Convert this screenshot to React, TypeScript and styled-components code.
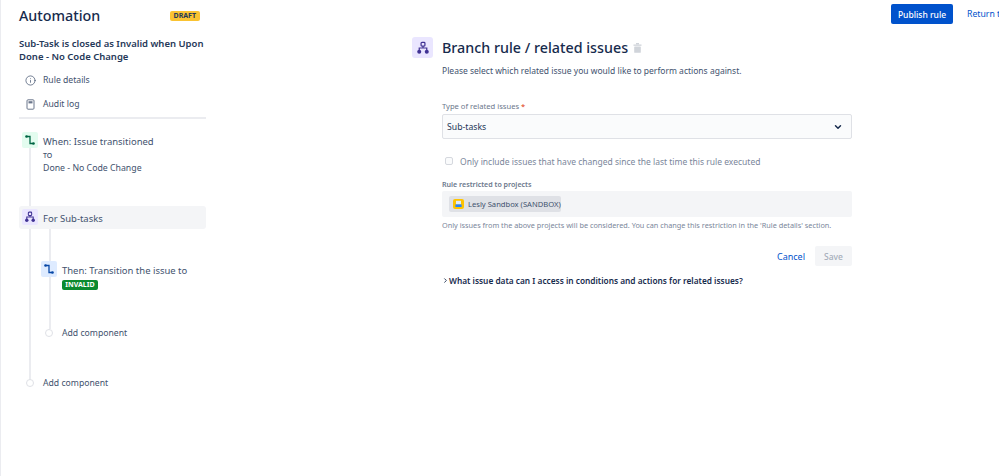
import React from 'react';
import styled, { createGlobalStyle } from 'styled-components';
import { ChevronDown, ChevronRight, Info } from 'lucide-react';

const GlobalStyle = createGlobalStyle`
  html, body {
    margin: 0;
    padding: 0;
    width: 999px;
    height: 476px;
    overflow: hidden;
    background: #fff;
    font-family: "Noto Sans", "Open Sans", sans-serif;
    color: #172b4d;
  }
  * { box-sizing: border-box; }
`;

const Page = styled.div`
  width: 999px;
  height: 476px;
  display: flex;
  overflow: hidden;
  border-left: 1px solid #ebecf0;
`;

const Sidebar = styled.aside`
  width: 187px;
  margin-left: 18px;
  flex-shrink: 0;
  display: flex;
  flex-direction: column;
`;

const SideHeader = styled.div`
  height: 31px;
  display: flex;
  align-items: center;
  justify-content: space-between;
  padding-right: 6px;
`;

const AppTitle = styled.h1`
  margin: 0;
  font-size: 14.3px;
  font-weight: 500;
  color: #172b4d;
`;

const DraftBadge = styled.span`
  height: 10px;
  padding: 0 4px;
  border-radius: 2px;
  background: #fac332;
  color: #253858;
  font-size: 7px;
  font-weight: 700;
  line-height: 10px;
`;

const RuleName = styled.h2`
  margin: 6px 0 0;
  font-size: 9.5px;
  line-height: 13px;
  font-weight: 600;
  color: #253858;
`;

const SideMenu = styled.nav`
  margin-top: 7px;
  padding-bottom: 3px;
  display: flex;
  flex-direction: column;
  gap: 4px;
  border-bottom: 2px solid #ebecf0;
`;

const SideMenuItem = styled.div`
  height: 20px;
  display: flex;
  align-items: center;
  gap: 7px;
  padding-left: 6px;
  font-size: 8.65px;
  color: #42526e;
`;

const Timeline = styled.div`
  position: relative;
  margin-top: 10px;
  display: flex;
  flex-direction: column;
`;

const Rail = styled.div<{ $left: number; $top: number; $height: number }>`
  position: absolute;
  left: ${p => p.$left}px;
  top: ${p => p.$top}px;
  width: 2px;
  height: ${p => p.$height}px;
  background: #ebecf0;
`;

const StepRow = styled.div<{ $active?: boolean; $indent?: boolean; $top?: number }>`
  position: relative;
  display: flex;
  align-items: flex-start;
  gap: 5px;
  padding: 3px;
  margin-top: ${p => p.$top ?? 0}px;
  margin-left: ${p => (p.$indent ? '19px' : '0')};
  min-height: ${p => (p.$active ? '23px' : '0')};
  border-radius: 3px;
  background: ${p => (p.$active ? '#f4f5f7' : 'transparent')};
`;

const StepIcon = styled.span<{ $bg: string }>`
  width: 16px;
  height: 16px;
  flex-shrink: 0;
  border-radius: 2px;
  background: ${p => p.$bg};
  display: flex;
  align-items: center;
  justify-content: center;
`;

const StepText = styled.div`
  font-size: 9.47px;
  line-height: 16px;
  margin: 2px 0 -2px;
  color: #42526e;
`;

const ToLabel = styled.div`
  font-size: 7px;
  line-height: 10px;
  margin-top: 3px;
  color: #42526e;
  font-weight: 500;
`;

const StepValue = styled.div`
  font-size: 8.75px;
  line-height: 13px;
  margin-top: 1px;
  color: #42526e;
`;

const InvalidBadge = styled.span`
  display: block;
  width: 36px;
  height: 10px;
  margin-top: 3px;
  border-radius: 2px;
  background: #0b8a2f;
  color: #fff;
  font-size: 7px;
  font-weight: 700;
  line-height: 10px;
  text-align: center;
`;

const AddRow = styled.div<{ $indent?: boolean; $top: number }>`
  position: relative;
  height: 14px;
  display: flex;
  align-items: center;
  gap: 9px;
  margin-top: ${p => p.$top}px;
  margin-left: ${p => (p.$indent ? '26px' : '7px')};
  font-size: 8.67px;
  color: #42526e;
`;

const AddDot = styled.span`
  width: 8px;
  height: 8px;
  flex-shrink: 0;
  border-radius: 50%;
  background: #fff;
  border: 1px solid #dfe1e6;
`;

const Main = styled.main`
  flex: 1;
  min-width: 0;
  display: flex;
  flex-direction: column;
`;

const TopBar = styled.div`
  height: 20px;
  margin-top: 4px;
  display: flex;
  align-items: center;
  gap: 14px;
  padding-left: 685px;
  white-space: nowrap;
`;

const PublishButton = styled.button`
  width: 62px;
  height: 20px;
  flex-shrink: 0;
  padding: 0;
  border: none;
  border-radius: 2px;
  background: #0052cc;
  color: #fff;
  font: 500 8.5px "Noto Sans", sans-serif;
`;

const LinkText = styled.span`
  font-size: 8.7px;
  color: #0052cc;
  flex-shrink: 0;
`;

const Content = styled.div`
  margin: 13px 0 0 206px;
  width: 440px;
  display: flex;
  flex-direction: column;
`;

const TitleRow = styled.div`
  display: flex;
  align-items: center;
  gap: 9px;
`;

const BigIcon = styled.span`
  width: 21px;
  height: 21px;
  flex-shrink: 0;
  border-radius: 3px;
  background: #eae6ff;
  display: flex;
  align-items: center;
  justify-content: center;
`;

const PageTitle = styled.h2`
  margin: 0 -4px 0 0;
  font-size: 14.3px;
  font-weight: 500;
  line-height: 21px;
  color: #172b4d;
`;

const Body = styled.div`
  margin-left: 30px;
  display: flex;
  flex-direction: column;
`;

const Intro = styled.p`
  margin: 6px 0 0;
  font-size: 8.5px;
  line-height: 14px;
  color: #42526e;
`;

const FieldLabel = styled.label<{ $top: number; $gap: number; $strong?: boolean }>`
  display: block;
  margin-top: ${p => p.$top}px;
  margin-bottom: ${p => p.$gap}px;
  font-size: ${p => (p.$strong ? 7.1 : 7.6)}px;
  line-height: 10px;
  font-weight: ${p => (p.$strong ? 600 : 400)};
  color: #6b778c;
`;

const Required = styled.span`
  color: #de350b;
`;

const SelectBox = styled.div`
  height: 25px;
  width: 410px;
  display: flex;
  align-items: center;
  justify-content: space-between;
  padding: 0 8px 0 4px;
  background: #fafbfc;
  border: 1.5px solid #dfe1e6;
  border-radius: 2px;
  font-size: 8.7px;
  color: #253858;
`;

const CheckRow = styled.div`
  margin-top: 15px;
  height: 14px;
  display: flex;
  align-items: center;
  gap: 7px;
  padding-left: 3px;
  font-size: 8.5px;
  color: #7a869a;
`;

const CheckBox = styled.span`
  width: 8px;
  height: 8px;
  flex-shrink: 0;
  border-radius: 2px;
  background: #fafbfc;
  border: 1px solid #d5d8de;
`;

const ProjectField = styled.div`
  width: 410px;
  height: 26px;
  padding: 5px 7px;
  border-radius: 2px;
  background: #f4f5f7;
`;

const ProjectChip = styled.span`
  width: 112px;
  height: 16px;
  display: flex;
  align-items: center;
  gap: 4px;
  padding-left: 4px;
  border-radius: 2px;
  background: #dfe1e6;
  font-size: 7.6px;
  color: #42526e;
  white-space: nowrap;
`;

const HelpText = styled.p`
  margin: 3px 0 0;
  font-size: 7.3px;
  line-height: 11px;
  color: #7a869a;
  white-space: nowrap;
`;

const Actions = styled.div`
  margin-top: 15px;
  width: 410px;
  display: flex;
  justify-content: flex-end;
  align-items: center;
  gap: 10px;
`;

const CancelLink = styled.span`
  font-size: 9px;
  color: #0052cc;
`;

const SaveButton = styled.button`
  width: 37px;
  height: 20px;
  padding: 0;
  border: none;
  border-radius: 2px;
  background: #f4f5f7;
  color: #a5adba;
  font: 500 8.5px "Noto Sans", sans-serif;
`;

const Disclosure = styled.div`
  margin-top: 7px;
  height: 14px;
  display: flex;
  align-items: center;
  font-size: 8.3px;
  font-weight: 600;
  color: #172b4d;
  white-space: nowrap;
`;

const BranchGlyph = ({ size }: { size: number }) => (
  <svg width={size} height={size} viewBox="0 0 16 16" fill="#403294">
    <rect x="5.8" y="1.5" width="4.4" height="4.4" rx="1" fill="none" stroke="#403294" strokeWidth="1.4" />
    <path d="M8 6v2M3.7 11V8h8.6v3" fill="none" stroke="#403294" strokeWidth="1.4" />
    <circle cx="3.7" cy="12.2" r="2.3" />
    <circle cx="12.3" cy="12.2" r="2.3" />
  </svg>
);

const TransitionGlyph = ({ color }: { color: string }) => (
  <svg width="12" height="12" viewBox="0 0 12 12" fill="none">
    <path d="M2.5 2.5H6v7h3.5" stroke={color} strokeWidth="1.3" />
    <circle cx="2.5" cy="2.5" r="1.3" fill={color} />
    <circle cx="9.5" cy="9.5" r="1.3" fill={color} />
  </svg>
);

const LogGlyph = () => (
  <svg width="11" height="11" viewBox="0 0 11 11" fill="none">
    <rect x="2" y="0.8" width="7" height="9.4" rx="1" stroke="#6b778c" strokeWidth="1" />
    <rect x="3.5" y="2.2" width="4" height="2.2" fill="#6b778c" />
  </svg>
);

const TrashGlyph = () => (
  <svg width="9" height="10" viewBox="0 0 9 10" fill="#d0d4da">
    <rect x="3" y="0" width="3" height="1.5" />
    <rect x="0.5" y="1.5" width="8" height="1.3" />
    <rect x="1.2" y="3.4" width="6.6" height="6.4" rx="0.6" />
  </svg>
);

const ProjectAvatar = () => (
  <svg width="11" height="10" viewBox="0 0 11 10">
    <rect width="11" height="10" rx="2" fill="#ffc400" />
    <rect x="3" y="1.8" width="5" height="3.6" fill="#deebff" />
    <rect x="2.4" y="5.4" width="6.2" height="2.6" fill="#2684ff" />
  </svg>
);

export default function App() {
  return (
    <>
      <GlobalStyle />
      <Page>
        <Sidebar>
          <SideHeader>
            <AppTitle>Automation</AppTitle>
            <DraftBadge>DRAFT</DraftBadge>
          </SideHeader>
          <RuleName>Sub-Task is closed as Invalid when Upon Done - No Code Change</RuleName>
          <SideMenu>
            <SideMenuItem>
              <Info size={11} strokeWidth={1.6} />
              Rule details
            </SideMenuItem>
            <SideMenuItem>
              <LogGlyph />
              Audit log
            </SideMenuItem>
          </SideMenu>
          <Timeline>
            <Rail $left={10} $top={16} $height={235} />
            <Rail $left={30} $top={100} $height={100} />
            <StepRow>
              <StepIcon $bg="#e3fcef"><TransitionGlyph color="#006644" /></StepIcon>
              <div>
                <StepText>When: Issue transitioned</StepText>
                <ToLabel>TO</ToLabel>
                <StepValue>Done - No Code Change</StepValue>
              </div>
            </StepRow>
            <StepRow $active $top={28}>
              <StepIcon $bg="#eae6ff"><BranchGlyph size={12} /></StepIcon>
              <StepText>For Sub-tasks</StepText>
            </StepRow>
            <StepRow $indent $top={29}>
              <StepIcon $bg="#deebff"><TransitionGlyph color="#0747a6" /></StepIcon>
              <div>
                <StepText>Then: Transition the issue to</StepText>
                <InvalidBadge>INVALID</InvalidBadge>
              </div>
            </StepRow>
            <AddRow $indent $top={33}>
              <AddDot />
              Add component
            </AddRow>
            <AddRow $top={36}>
              <AddDot />
              Add component
            </AddRow>
          </Timeline>
        </Sidebar>
        <Main>
          <TopBar>
            <PublishButton>Publish rule</PublishButton>
            <LinkText>Return to list</LinkText>
          </TopBar>
          <Content>
            <TitleRow>
              <BigIcon><BranchGlyph size={14} /></BigIcon>
              <PageTitle>Branch rule / related issues</PageTitle>
              <TrashGlyph />
            </TitleRow>
            <Body>
              <Intro>Please select which related issue you would like to perform actions against.</Intro>
              <FieldLabel $top={23} $gap={3}>Type of related issues <Required>*</Required></FieldLabel>
              <SelectBox>
                Sub-tasks
                <ChevronDown size={10} strokeWidth={3.5} color="#172b4d" />
              </SelectBox>
              <CheckRow>
                <CheckBox />
                Only include issues that have changed since the last time this rule executed
              </CheckRow>
              <FieldLabel $top={11} $gap={2} $strong>Rule restricted to projects</FieldLabel>
              <ProjectField>
                <ProjectChip>
                  <ProjectAvatar />
                  Lesly Sandbox (SANDBOX)
                </ProjectChip>
              </ProjectField>
              <HelpText>Only issues from the above projects will be considered. You can change this restriction in the 'Rule details' section.</HelpText>
              <Actions>
                <CancelLink>Cancel</CancelLink>
                <SaveButton>Save</SaveButton>
              </Actions>
              <Disclosure>
                <ChevronRight size={7} strokeWidth={3} />
                What issue data can I access in conditions and actions for related issues?
              </Disclosure>
            </Body>
          </Content>
        </Main>
      </Page>
    </>
  );
}
